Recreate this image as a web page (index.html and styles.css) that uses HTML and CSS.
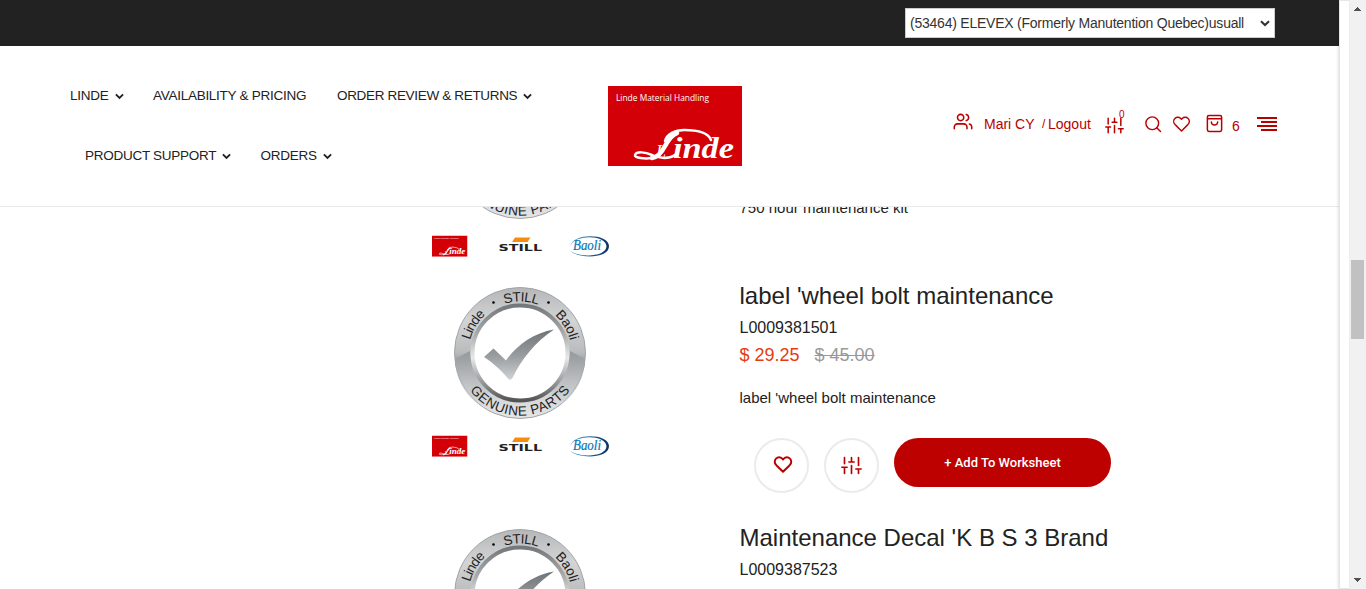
FILE: index.html
```html
<!DOCTYPE html>
<html lang="en">
<head>
<meta charset="utf-8">
<title>Linde Material Handling</title>
<link rel="stylesheet" href="styles.css">
</head>
<body>
<svg class="defs" aria-hidden="true">
  <defs>
    <linearGradient id="ring" x1="0" y1="0" x2="0" y2="1">
      <stop offset="0" stop-color="#b4b6b8"/><stop offset=".25" stop-color="#d2d4d5"/><stop offset=".5" stop-color="#b8babc"/><stop offset=".53" stop-color="#aaadaf"/><stop offset=".72" stop-color="#c9cbcc"/><stop offset="1" stop-color="#e4e5e6"/>
    </linearGradient>
    <linearGradient id="side" x1="0" y1="0" x2="0" y2="1">
      <stop offset="0" stop-color="#94989b"/><stop offset="1" stop-color="#c8cacc" stop-opacity=".2"/>
    </linearGradient>
    <linearGradient id="rim" x1="0" y1="0" x2="0" y2="1">
      <stop offset="0" stop-color="#75787a"/><stop offset=".3" stop-color="#a9abad"/><stop offset=".55" stop-color="#e8e9ea"/><stop offset=".8" stop-color="#999b9d"/><stop offset="1" stop-color="#525456"/>
    </linearGradient>
    <linearGradient id="tick" x1="0" y1="0" x2="0" y2="1">
      <stop offset="0" stop-color="#6f7376"/><stop offset=".55" stop-color="#9b9fa2"/><stop offset="1" stop-color="#d0d2d3"/>
    </linearGradient>
    <linearGradient id="oval"><stop offset="0" stop-color="#55a9d8"/><stop offset=".6" stop-color="#17578f"/><stop offset="1" stop-color="#0c2f62"/></linearGradient>
    <path id="arc-top" d="M48.500 81a51.500 51.500 0 0 1 103 0"/>
    <path id="arc-bottom" d="M37.500 81a62.500 62.500 0 0 0 125 0"/>
  </defs>
  <symbol id="linde" viewBox="0 0 134 80">
    <path fill="#d30007" d="M0 0h134v80H0z"/>
    <text class="logo-caption" x="8" y="15" textLength="93" lengthAdjust="spacingAndGlyphs">Linde Material Handling</text>
    <text class="logo-script" y="71.500"><tspan class="logo-script-cap" x="48">L</tspan><tspan x="65" textLength="61" lengthAdjust="spacingAndGlyphs">inde</tspan></text>
    <path class="swash stem" d="M69 47c-6 2-9 8-12 13-3 6-7 11-13 12"/>
    <path class="swash" d="M44 72c-7 1-18 0-17-3 2-4 10-3 17 0 8 4 17 4 23 0"/>
    <path class="swash" d="M57 55c2-7 10-11 19-11 13 0 24 2 27 10"/>
  </symbol>
  <symbol id="media" viewBox="0 0 200 200">
    <circle cx="100" cy="81" r="65.500" fill="url(#ring)" stroke="#a2a4a6" stroke-width="1"/>
    <path fill="url(#side)" d="M35 87l15-8c0 16 8 32 20 40l-14 12C43 120 35 104 35 87zM165 87l-15-8c0 16-8 32-20 40l14 12c13-11 21-27 21-44z"/>
    <circle cx="100" cy="81" r="47.500" fill="#fff" stroke="url(#rim)" stroke-width="4"/>
    <path fill="url(#tick)" d="M64 85l9.500-8.500L86 88.500C96 74 113 61 134 57.500 115 70 101 88 92.500 106q-2.500 3.500-5 0C80 97 73 91 64 85z"/>
    <text class="badge-text"><textPath href="#arc-top" startOffset="13" textLength="30">Linde</textPath></text>
    <text class="badge-text"><textPath href="#arc-top" startOffset="65" textLength="34">STILL</textPath></text>
    <text class="badge-text"><textPath href="#arc-top" startOffset="119" textLength="30">Baoli</textPath></text>
    <circle cx="73.500" cy="30.500" r="1.300"/><circle cx="128.500" cy="30.500" r="1.300"/>
    <text class="badge-text"><textPath href="#arc-bottom" startOffset="40" textLength="116">GENUINE PARTS</textPath></text>
    <use href="#linde" x="12" y="163.500" width="35.500" height="21.200"/>
    <path fill="#f78b0b" d="M95 165.500h15.500l-3 4.500H92z"/>
    <text class="still" x="78.500" y="178.500" textLength="43.500" lengthAdjust="spacingAndGlyphs">STILL</text>
    <path fill="url(#oval)" fill-rule="evenodd" d="M150.500 174c2-13 38-13 38.500 0 0 14-33 12-38.500 5 10 7 36 6 36-5-1-11-31-12-36 0z"/>
    <text class="baoli" x="153" y="178" textLength="28" lengthAdjust="spacingAndGlyphs">Baoli</text>
  </symbol>
  <symbol id="chevron" viewBox="0 0 10 7"><path fill="none" stroke="currentColor" stroke-width="2.100" d="M1 1.200l4 3.800 4-3.800"/></symbol>
  <symbol id="heart" viewBox="0 0 24 24"><path d="M20.800 4.600a5.500 5.500 0 0 0-7.800 0L12 5.700l-1-1.100a5.500 5.500 0 0 0-7.800 7.800l1 1.100L12 21.200l7.800-7.700 1-1.100a5.500 5.500 0 0 0 0-7.800z"/></symbol>
  <symbol id="sliders" viewBox="0 0 24 24"><path d="M4 21v-7M4 10V3M12 21v-9M12 8V3M20 21v-5M20 12V3M1 14h6M9 8h6M17 16h6"/></symbol>
</svg>

<div class="page">
  <header class="header">
    <div class="topbar"><div class="account">(53464) ELEVEX (Formerly Manutention Quebec)usuall<svg class="select-arrow"><use href="#chevron"/></svg></div></div>
    <div class="navbar">
      <nav class="menu">
        <div class="menu-row">
          <a class="w-linde">LINDE</a><svg class="chev"><use href="#chevron"/></svg>
          <a class="w-avail">AVAILABILITY &amp; PRICING</a>
          <a class="w-review">ORDER REVIEW &amp; RETURNS</a><svg class="chev"><use href="#chevron"/></svg>
        </div>
        <div class="menu-row second">
          <a class="w-support">PRODUCT SUPPORT</a><svg class="chev"><use href="#chevron"/></svg>
          <a class="w-orders">ORDERS</a><svg class="chev"><use href="#chevron"/></svg>
        </div>
      </nav>
      <svg class="logo"><use href="#linde"/></svg>
      <div class="tools">
        <svg class="icon users" viewBox="0 0 24 24"><path d="M17 21v-2a4 4 0 0 0-4-4H5a4 4 0 0 0-4 4v2M23 21v-2a4 4 0 0 0-3-3.900M16 3.100a4 4 0 0 1 0 7.800"/><circle cx="9" cy="7" r="4"/></svg>
        <span class="name">Mari CY</span><span class="slash">/</span><span class="logout">Logout</span>
        <svg class="icon compare"><use href="#sliders"/></svg><sup class="count">0</sup>
        <svg class="icon search" viewBox="0 0 24 24"><circle cx="11" cy="11" r="8.500"/><path d="M22 22l-5-5"/></svg>
        <svg class="icon wish"><use href="#heart"/></svg>
        <svg class="icon bag" viewBox="0 0 24 24"><path d="M3 6v14a2 2 0 0 0 2 2h14a2 2 0 0 0 2-2V4a2 2 0 0 0-2-2H5a2 2 0 0 0-2 2zM3 6h18M16 10a4 4 0 0 1-8 0"/></svg>
        <span class="items">6</span>
        <svg class="burger" viewBox="0 0 20 14"><path d="M0 0h20v2H0zM4 4h16v2H4zM0 8h20v2H0zM4 12h16v2H4z"/></svg>
      </div>
    </div>
  </header>
  <main class="products">
    <article class="product first"><svg class="media"><use href="#media"/></svg><div class="info"><p class="desc">750 hour maintenance kit</p></div></article>
    <article class="product">
      <svg class="media"><use href="#media"/></svg>
      <div class="info">
        <h2>label 'wheel bolt maintenance</h2>
        <div class="sku">L0009381501</div>
        <div class="price">$ 29.25<del>$ 45.00</del></div>
        <p class="desc">label 'wheel bolt maintenance</p>
        <div class="actions">
          <span class="round"><svg class="icon heart"><use href="#heart"/></svg></span>
          <span class="round"><svg class="icon slide"><use href="#sliders"/></svg></span>
          <a class="add">+ Add To Worksheet</a>
        </div>
      </div>
    </article>
    <article class="product">
      <svg class="media"><use href="#media"/></svg>
      <div class="info"><h2>Maintenance Decal 'K B S 3 Brand</h2><div class="sku">L0009387523</div></div>
    </article>
  </main>
</div>
<aside class="drawer"></aside>
<div class="scrollbar">
  <svg class="arrow" viewBox="0 0 7 4"><path d="M3 0h1v1h1v1h1v1h1v1H0V3h1V2h1V1h1z"/></svg>
  <div class="thumb"></div>
  <svg class="arrow down" viewBox="0 0 7 4"><path d="M0 0h7v1H6v1H5v1H4v1H3V3H2V2H1V1H0z"/></svg>
</div>
</body>
</html>
```
FILE: styles.css
```css
* { box-sizing: border-box; }
body { margin: 0; display: flex; width: 1366px; height: 589px; overflow: hidden; background: #fff; color: #222; font-family: "Liberation Sans", Arial, sans-serif; }
.defs { position: absolute; width: 0; height: 0; }
svg { display: block; flex: none; }
.page { width: 1339px; height: 589px; overflow: hidden; }
.header { position: relative; z-index: 1; height: 207px; background: #fff; border-bottom: 1px solid #e9e9e9; }
.topbar { height: 46px; background: #222; padding: 8px 64px 0 0; display: flex; justify-content: flex-end; }
.account { width: 370px; height: 30px; background: #fff; border: 1px solid #ccc; padding: 0 4px; display: flex; align-items: center; justify-content: space-between; font-size: 14px; letter-spacing: -.23px; color: #333; white-space: nowrap; }
.select-arrow { width: 10px; height: 7px; }
.navbar { height: 160px; display: flex; }
.menu { width: 608px; padding: 19px 0 0 70px; font-size: 13.500px; letter-spacing: -.27px; }
.menu-row { display: flex; align-items: center; height: 60px; white-space: nowrap; }
.second { padding-left: 15px; }
.chev { width: 9px; height: 7px; margin: 3px 29px 0 6px; }
.w-linde { width: 39px; }
.w-avail { width: 154px; margin-right: 30px; }
.w-review { width: 180px; letter-spacing: -.33px; }
.w-support { width: 131px; }
.w-orders { width: 56px; }
.second .w-orders { margin-left: .5px; }
.logo { width: 134px; height: 80px; margin-top: 40px; }
.logo-caption { font: 9.500px "Open Sans", sans-serif; fill: #fff; }
.logo-script { font: italic bold 29px "Liberation Serif", serif; fill: #fff; }
.logo-script-cap { font-size: 18px; font-weight: 400; }
.swash { fill: none; stroke: #fff; stroke-width: 2.500; stroke-linecap: round; }
.stem { stroke-width: 4.500; }
.tools { display: flex; align-items: center; margin-left: 211px; height: 156px; color: #b90000; font-size: 14px; white-space: nowrap; }
.icon { fill: none; stroke: #b90000; stroke-width: 1.900; stroke-linecap: round; stroke-linejoin: round; }
.users { width: 20px; height: 19px; margin: -5px 11px 0 0; }
.name { width: 58px; }
.slash { width: 6px; font-size: 12px; }
.logout { width: 57px; }
.compare { width: 19px; height: 19px; margin-top: 2px; }
.count { font-size: 10px; line-height: 10px; width: 6px; margin: -19px 19px 0 -5px; }
.search { width: 18px; height: 18px; margin-right: 10px; }
.wish { width: 19px; height: 18px; margin: -1px 14px 0 0; }
.bag { width: 19px; height: 19px; margin: -1px 8px 0 0; }
.items { width: 25px; margin-top: 4px; }
.burger { width: 20px; height: 14px; fill: #b90000; }
.products { margin-top: -135px; }
.product { display: flex; height: 242px; padding-left: 420px; }
.first { height: 200px; }
.first .info { padding-top: 105px; }
.media { width: 200px; height: 200px; }
.badge-text { font: 13.500px "Liberation Sans", Arial, sans-serif; fill: #222; }
.still { font: bold 8.500px "DejaVu Sans", sans-serif; fill: #222; }
.baoli { font: italic 14px "Liberation Serif", serif; fill: #0877b7; stroke: #0877b7; stroke-width: .2; }
.info { margin-left: 119.500px; padding-top: 8px; }
h2 { margin: 0; font-size: 24px; font-weight: 400; line-height: 32px; }
.sku { font-size: 16px; line-height: 31px; }
.price { font-size: 18px; line-height: 24px; color: #e63b10; }
.price del { color: #999; margin-left: 15px; }
.desc { margin: 20px 0 0; font-size: 15px; line-height: 22px; }
.actions { display: flex; padding: 29px 0 0 14.500px; }
.round { width: 55px; height: 55px; border: 2px solid #ebebeb; border-radius: 50%; margin-right: 15px; display: flex; align-items: center; justify-content: center; }
.heart { width: 20px; height: 19px; stroke-width: 2.500; margin: -2px 0 0 3px; }
.slide { width: 21px; height: 21px; }
.add { width: 217px; height: 49px; border-radius: 25px; background: #bd0000; color: #fff; text-align: center; font: 500 13px/49px Roboto, sans-serif; }
.drawer { width: 10px; border: 1px solid #e6e6e6; border-right: 0; box-shadow: -1px 0 3px rgba(0,0,0,.12); position: relative; z-index: 2; }
.scrollbar { width: 17px; background: #f1f1f1; display: flex; flex-direction: column; align-items: center; padding: 7px 0; }
.arrow { width: 7px; height: 4px; fill: #505050; }
.thumb { width: 13px; height: 79px; margin-top: 249px; background: #c1c1c1; }
.down { margin-top: auto; }
```
